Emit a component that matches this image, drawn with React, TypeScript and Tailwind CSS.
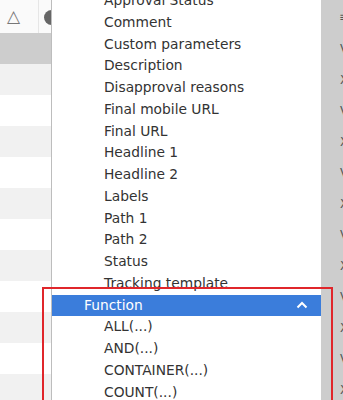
import React from "react";

const fields = [
  "Approval Status",
  "Comment",
  "Custom parameters",
  "Description",
  "Disapproval reasons",
  "Final mobile URL",
  "Final URL",
  "Headline 1",
  "Headline 2",
  "Labels",
  "Path 1",
  "Path 2",
  "Status",
  "Tracking template",
];

const functions = ["ALL(...)", "AND(...)", "CONTAINER(...)", "COUNT(...)", "DATE(...)"];

const stripes = [
  "bg-[#cdcdcd]",
  "bg-[#f1f1f1]",
  "bg-white",
  "bg-[#f1f1f1]",
  "bg-white",
  "bg-[#f1f1f1]",
  "bg-white",
  "bg-[#f1f1f1]",
  "bg-white",
  "bg-[#f1f1f1]",
  "bg-white",
  "bg-[#f1f1f1]",
];

export default function App() {
  return (
    <div
      className="relative w-[343px] h-[400px] overflow-hidden bg-white"
      style={{ fontFamily: "'DejaVu Sans', Verdana, sans-serif" }}
    >
      <div className="flex h-full">
        {/* table behind, left part */}
        <div className="w-[51px] shrink-0 flex flex-col">
          <div className="h-[33px] shrink-0 flex items-center bg-[#fafafa] relative">
            <span className="ml-[7px] text-[#777] text-[17px] leading-none">△</span>
            <div className="ml-auto h-full w-px bg-[#e6e6e6] mr-[12px]" />
            <div className="absolute left-[44px] top-[10px] h-[15px] w-[15px] rounded-full bg-[#666]" />
          </div>
          {stripes.map((c, i) => (
            <div key={i} className={`h-[31px] shrink-0 ${c}`} />
          ))}
        </div>

        {/* dropdown list */}
        <div className="relative z-10 w-[270px] shrink-0 bg-white border-l border-[#bdbdbd] overflow-hidden">
          <ul className="-mt-[10px] text-[13.8px] text-[#333]">
            {fields.map((f) => (
              <li key={f} className="h-[21.75px] leading-[21.75px] pl-[52px] whitespace-nowrap">
                {f}
              </li>
            ))}
            <li className="h-[21.75px] leading-[21.75px] pl-[32px] bg-[#3b7ddb] text-white flex items-center justify-between pr-[13px]">
              <span>Function</span>
              <svg width="12" height="8" viewBox="0 0 12 8" fill="none">
                <path d="M1.5 6.5 6 2l4.5 4.5" stroke="white" strokeWidth="2" />
              </svg>
            </li>
            {functions.map((f) => (
              <li key={f} className="h-[21.75px] leading-[21.75px] pl-[52px] whitespace-nowrap">
                {f}
              </li>
            ))}
          </ul>
        </div>

        {/* table behind, right part */}
        <div className="flex-1 bg-[#cdcdcd] flex flex-col text-[12px] text-[#555] overflow-hidden">
          <div className="h-[33px] shrink-0 flex items-center pl-[18px]">≡</div>
          {["V", "X", "V", "X", "V", "X", "V", "X", "V", "X", "V", "X"].map((c, i) => (
            <div key={i} className="h-[31px] shrink-0 flex items-center pl-[19px]">
              {c}
            </div>
          ))}
        </div>
      </div>

      {/* annotation box */}
      <div className="absolute left-[42px] top-[287px] w-[291px] h-[140px] border-2 border-[#e0262b] z-20 pointer-events-none" />
    </div>
  );
}
